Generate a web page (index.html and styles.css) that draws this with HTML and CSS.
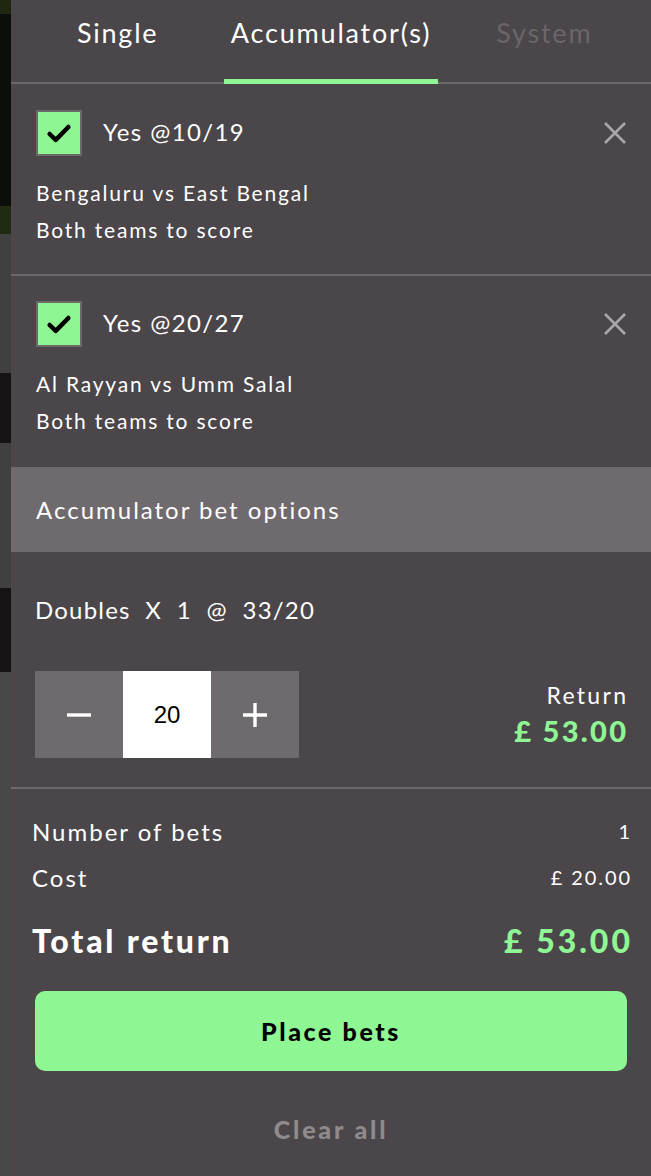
FILE: index.html
```html
<!DOCTYPE html>
<html lang="en">
<head>
<meta charset="utf-8">
<title>Bet slip</title>
<link rel="stylesheet" href="styles.css">
</head>
<body>
<div class="page">
  <div class="backdrop">
    <div class="bd bd-green" style="height:14px"></div>
    <div class="bd bd-dark" style="height:192px"></div>
    <div class="bd bd-green2" style="height:28px"></div>
    <div class="bd bd-gray" style="height:139px"></div>
    <div class="bd bd-black" style="height:70px"></div>
    <div class="bd bd-gray" style="height:145px"></div>
    <div class="bd bd-black" style="height:84px"></div>
    <div class="bd bd-gray2 grow"></div>
  </div>
  <main class="slip">
    <nav class="tabs">
      <div class="tab">Single</div>
      <div class="tab active">Accumulator(s)</div>
      <div class="tab disabled">System</div>
    </nav>

    <section class="bet first">
      <div class="bet-head">
        <span class="check"><svg viewBox="0 0 24 24" width="30" height="30"><path d="M4.5 12.8l4.9 4.7L19.5 7.2" fill="none" stroke="#000" stroke-width="3.6" stroke-linecap="round" stroke-linejoin="round"/></svg></span>
        <span class="pick">Yes @10/19</span>
        <span class="close"><svg viewBox="0 0 24 24" width="24" height="24"><path d="M2 2L22 22M22 2L2 22" stroke="#a9a6a8" stroke-width="2.6"/></svg></span>
      </div>
      <div class="bet-info">
        <div>Bengaluru vs East Bengal</div>
        <div>Both teams to score</div>
      </div>
    </section>

    <section class="bet second">
      <div class="bet-head">
        <span class="check"><svg viewBox="0 0 24 24" width="30" height="30"><path d="M4.5 12.8l4.9 4.7L19.5 7.2" fill="none" stroke="#000" stroke-width="3.6" stroke-linecap="round" stroke-linejoin="round"/></svg></span>
        <span class="pick">Yes @20/27</span>
        <span class="close"><svg viewBox="0 0 24 24" width="24" height="24"><path d="M2 2L22 22M22 2L2 22" stroke="#a9a6a8" stroke-width="2.6"/></svg></span>
      </div>
      <div class="bet-info">
        <div>Al Rayyan vs Umm Salal</div>
        <div>Both teams to score</div>
      </div>
    </section>

    <div class="band">Accumulator bet options</div>

    <section class="acca">
      <div class="acca-title">Doubles&nbsp; X&nbsp; 1&nbsp; @&nbsp; 33/20</div>
      <div class="acca-row">
        <div class="stepper">
          <span class="step"><svg viewBox="0 0 24 24" width="24" height="24"><path d="M0 12H24" stroke="#fff" stroke-width="3.4"/></svg></span>
          <span class="amount">20</span>
          <span class="step"><svg viewBox="0 0 24 24" width="24" height="24"><path d="M0 12H24M12 0V24" stroke="#fff" stroke-width="3.4"/></svg></span>
        </div>
        <div class="ret">
          <div class="ret-label">Return</div>
          <div class="ret-val">£ 53.00</div>
        </div>
      </div>
    </section>

    <section class="summary">
      <div class="sum-row"><span>Number of bets</span><span class="small">1</span></div>
      <div class="sum-row"><span>Cost</span><span class="small">£ 20.00</span></div>
      <div class="sum-row total"><span>Total return</span><span class="green">£ 53.00</span></div>
      <button class="place">Place bets</button>
      <div class="clear">Clear all</div>
    </section>
  </main>
</div>
</body>
</html>
```
FILE: styles.css
```css
* { box-sizing: border-box; }
html, body { margin: 0; padding: 0; }
body {
  width: 651px;
  height: 1176px;
  overflow: hidden;
  background: #4b4649;
  font-family: "Lato", "Noto Sans", sans-serif;
  color: #fff;
}
.page { display: flex; height: 1176px; }
.backdrop { width: 11px; display: flex; flex-direction: column; flex: none; }
.bd { flex: none; }
.bd.grow { flex: 1; }
.bd-green { background: #1f2713; }
.bd-dark { background: #0b0e09; }
.bd-green2 { background: #212a13; }
.bd-gray { background: #404040; }
.bd-black { background: #151314; }
.bd-gray2 { background: #484848; }

.slip { width: 640px; background: #4b4649; display: flex; flex-direction: column; }

.tabs { display: flex; height: 84px; border-bottom: 2px solid #6e696c; }
.tab {
  flex: 1;
  height: 84px;
  margin-bottom: -2px;
  border-bottom: 5px solid transparent;
  display: flex;
  justify-content: center;
  padding-top: 15px;
  font-size: 27px;
  line-height: 36px;
  letter-spacing: 1.8px;
}
.tab.active { border-bottom-color: #8ef794; }
.tab.disabled { color: #6a6568; }

.bet { padding: 26px 24px 26px 25px; border-bottom: 2px solid #6e696c; }
.bet.second { padding-top: 25px; padding-bottom: 28px; border-bottom: none; }
.bet-head { display: flex; align-items: center; height: 46px; }
.check {
  width: 46px; height: 46px;
  background: #8ef794;
  border: 2px solid #6b6a69;
  display: flex; align-items: center; justify-content: center;
}
.pick { font-size: 24px; margin-left: 21px; flex: 1; letter-spacing: 1.4px; line-height: 30px; padding-bottom: 3px; }
.close { display: flex; width: 24px; height: 24px; }
.bet-info { margin-top: 18px; font-size: 21px; line-height: 37px; letter-spacing: 1.8px; }

.band {
  background: #6f6a6d;
  height: 85px;
  display: flex; align-items: center;
  padding-left: 25px;
  font-size: 24px;
  letter-spacing: 2px;
}

.acca { padding: 40px 25px 29px 24px; border-bottom: 2px solid #6e696c; }
.acca-title { font-size: 24px; line-height: 36px; letter-spacing: 1.2px; }
.acca-row { display: flex; justify-content: space-between; align-items: flex-end; margin-top: 43px; }
.stepper { display: flex; height: 87px; }
.step, .amount { width: 88px; display: flex; align-items: center; justify-content: center; }
.step { background: #6f6a6d; }
.amount { background: #fff; color: #000; font-family: "Liberation Sans", Arial, sans-serif; font-size: 24px; }
.ret { text-align: right; padding-bottom: 6px; }
.ret-label { font-size: 23px; line-height: 30px; letter-spacing: 2.3px; margin-right: -2.3px; }
.ret-val { font-size: 29px; font-weight: 900; color: #8ef794; line-height: 42px; letter-spacing: 2.3px; margin-right: -2.3px; }

.summary { padding: 19px 21px 0 21px; display: flex; flex-direction: column; }
.sum-row { display: flex; justify-content: space-between; align-items: center; font-size: 24px; height: 46px; letter-spacing: 2px; }
.sum-row .small { font-size: 20px; letter-spacing: 1.9px; margin-right: -1.9px; }
.sum-row.total { font-size: 32px; font-weight: 900; height: 58px; margin-top: 11px; letter-spacing: 2.8px; }
.sum-row.total .green { color: #8ef794; letter-spacing: 3px; margin-right: -3px; }
.place {
  margin: 22px 3px 0 3px;
  height: 80px;
  border: none;
  border-radius: 10px;
  background: #8ef794;
  color: #000;
  font-family: inherit;
  font-size: 25px;
  font-weight: 900;
  letter-spacing: 2.6px;
}
.clear { text-align: center; margin-top: 43px; font-size: 25px; font-weight: 900; color: #8f8b8d; letter-spacing: 2.8px; }
```
